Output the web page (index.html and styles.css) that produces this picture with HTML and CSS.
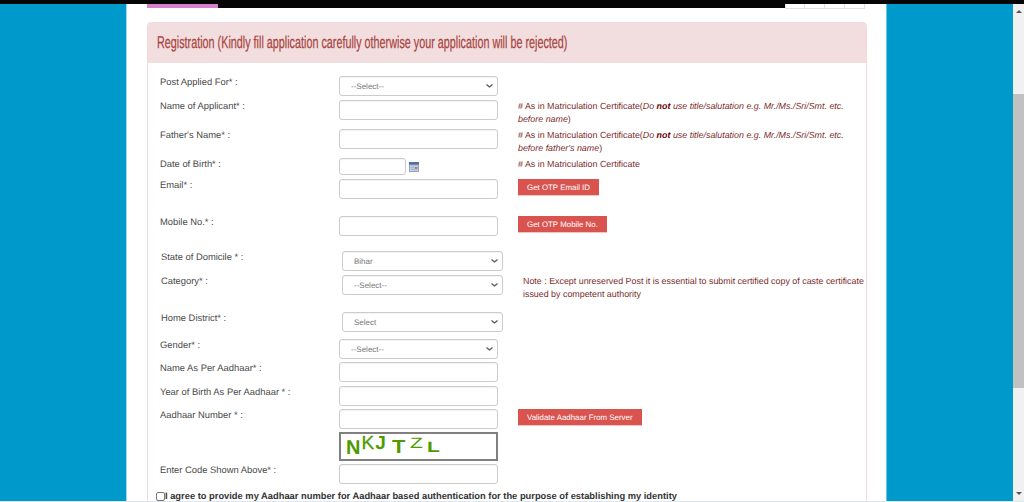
FILE: index.html
```html
<!DOCTYPE html>
<html lang="en">
<head>
<meta charset="utf-8">
<title>Registration</title>
<link rel="stylesheet" href="styles.css">
</head>
<body>
<div class="strip"></div>
<div class="layout">
  <div class="side"></div>
  <main class="main">
    <div class="topnav">
      <div class="nav-bar"><div class="nav-active"></div></div>
      <div class="tabs"><span class="tab"></span><span class="tab"></span><span class="tab"></span><span class="tab"></span></div>
    </div>
    <section class="panel">
      <h1 class="panel-head"><span class="panel-title">Registration (Kindly fill application carefully otherwise your application will be rejected)</span></h1>
      <form class="panel-body">
        <div class="row h24"><label class="lbl">Post Applied For* :</label><select class="field"><option>--Select--</option></select></div>
        <div class="row h29"><label class="lbl">Name of Applicant* :</label><input class="field"><p class="note"># As in Matriculation Certificate(<em>Do <b>not</b> use title/salutation e.g. Mr./Ms./Sri/Smt. etc. before name</em>)</p></div>
        <div class="row h29"><label class="lbl">Father's Name* :</label><input class="field"><p class="note"># As in Matriculation Certificate(<em>Do <b>not</b> use title/salutation e.g. Mr./Ms./Sri/Smt. etc. before father's name</em>)</p></div>
        <div class="row h21"><label class="lbl">Date of Birth* :</label><div class="date"><input class="field field-date"><svg class="cal" viewBox="0 0 10 10" width="10" height="10" aria-hidden="true"><rect width="10" height="10" fill="#8fa6c8"/><rect width="10" height="2.5" fill="#4f6f9f"/><rect x="1" y="3.5" width="8" height="5.5" fill="#d5deec"/><path d="M1 5.3h8M1 7.2h8M3 3.5v5.5M5 3.5v5.5M7 3.5v5.5" stroke="#8fa6c8" stroke-width=".6"/><rect x="6" y="5" width="2.5" height="2" fill="#e0705a"/></svg></div><p class="note"># As in Matriculation Certificate</p></div>
        <div class="row h37"><label class="lbl">Email* :</label><input class="field"><div><button type="button" class="btn">Get OTP Email ID</button></div></div>
        <div class="row h35"><label class="lbl">Mobile No.* :</label><input class="field"><div><button type="button" class="btn">Get OTP Mobile No.</button></div></div>
        <div class="row row-alt h24"><label class="lbl">State of Domicile * :</label><select class="field"><option>Bihar</option></select></div>
        <div class="row row-alt h37"><label class="lbl">Category* :</label><select class="field"><option>--Select--</option></select><p class="note note-plain">Note : Except unreserved Post it is essential to submit certified copy of caste certificate issued by competent authority</p></div>
        <div class="row row-alt h27"><label class="lbl">Home District* :</label><select class="field"><option>Select</option></select></div>
        <div class="row h23"><label class="lbl">Gender* :</label><select class="field"><option>--Select--</option></select></div>
        <div class="row h24"><label class="lbl">Name As Per Aadhaar* :</label><input class="field"></div>
        <div class="row h23"><label class="lbl">Year of Birth As Per Aadhaar * :</label><input class="field"></div>
        <div class="row h23"><label class="lbl">Aadhaar Number * :</label><input class="field"><div><button type="button" class="btn">Validate Aadhaar From Server</button></div></div>
        <div class="row h32"><span></span><div class="captcha"><span class="c1">N</span><span class="c2">K</span><span class="c3">J</span><span class="c4">T</span><span class="c5">Z</span><span class="c6">L</span></div></div>
        <div class="row h26"><label class="lbl">Enter Code Shown Above* :</label><input class="field"></div>
        <div class="agree"><input type="checkbox" class="check"><span>I agree to provide my Aadhaar number for Aadhaar based authentication for the purpose of establishing my identity</span></div>
      </form>
    </section>
  </main>
  <div class="side"></div>
  <div class="scrollbar">
    <span class="arrow arrow-up"></span>
    <span class="thumb"></span>
    <span class="arrow arrow-down"></span>
  </div>
</div>
<div class="statusline"></div>
</body>
</html>
```

FILE: styles.css
```css
* { box-sizing: border-box; text-rendering: geometricPrecision; }
html, body { margin: 0; height: 502px; overflow: hidden; }
body { font-family: "Liberation Sans", Arial, sans-serif; background: #fff; display: flex; flex-direction: column; }

.strip { height: 4px; flex: none; background: #050505; }
.layout { height: 497px; flex: none; display: flex; overflow: hidden; }
.statusline { height: 1px; flex: none; background: #dbe6f3; }

.side { background: #0099cc; flex: none; width: 126px; }
.main { flex: none; width: 761px; padding: 0 19px 0 20px; background: #fff; border-left: 1px solid #9fdcf0; border-right: 1px solid #6cc6e4; overflow: hidden; }

.scrollbar { flex: none; width: 12px; margin-left: auto; background: #f1f1f1; display: flex; flex-direction: column; align-items: center; }
.arrow { flex: none; width: 0; height: 0; border-left: 3px solid transparent; border-right: 3px solid transparent; }
.arrow-up { margin-top: 6px; border-bottom: 3px solid #555; }
.arrow-down { margin-top: 104px; border-top: 3px solid #555; }
.thumb { flex: none; width: 100%; height: 294px; margin-top: 81px; background: #c1c1c1; }

.topnav { display: flex; height: 5px; }
.nav-bar { flex: none; width: 638px; height: 4px; background: #050505; }
.nav-active { width: 71px; height: 4px; background: #d680cc; }
.tabs { display: flex; }
.tab { width: 20px; height: 5px; background: #fff; border: 1px solid #e2e2e2; border-top: 0; }
.tab + .tab { border-left: 0; }

.panel { margin-top: 13px; width: 720px; height: 700px; border: 1px solid #f0dadd; border-radius: 4px; background: #fff; }
.panel-head { margin: 0; height: 40px; padding: 0 9px; background: #f2dede; color: #a94442; font: 400 17px/39px "Liberation Sans", sans-serif; white-space: nowrap; }
.panel-title { display: inline-block; transform: scaleX(.635); transform-origin: left center; -webkit-text-stroke: .25px #a94442; }
.panel-body { margin: 0; padding: 13px 0 0 12px; }

.row { display: grid; grid-template-columns: 179px 159px 1fr; align-items: start; }
.row-alt { grid-template-columns: 181px 161px 1fr; padding-left: 1px; }
.h21 { height: 21px; } .h23 { height: 23px; } .h24 { height: 24px; } .h26 { height: 26px; }
.h27 { height: 27px; } .h29 { height: 29px; } .h32 { height: 32px; } .h35 { height: 35px; } .h36 { height: 36px; } .h37 { height: 37px; }
.row > div:nth-child(3) { margin-left: 20px; }

.lbl { font-size: 9.400px; line-height: 12px; color: #4a4a4a; white-space: nowrap; }
.field { display: block; width: 100%; height: 20px; padding: 0 7px; margin: 0; background: #fff; border: 1px solid #ccc; border-radius: 3px; box-shadow: inset 0 1px 1px rgba(0,0,0,.05); font: 8px "Liberation Sans", sans-serif; color: #777; }
select.field { appearance: none; padding-left: 11px; background: #fff url("data:image/svg+xml,%3Csvg xmlns='http://www.w3.org/2000/svg' width='7' height='4'%3E%3Cpath d='M.5.5 3.500 3 6.500.5' fill='none' stroke='%23555' stroke-width='1.200'/%3E%3C/svg%3E") no-repeat right 4px center; }
.date { display: flex; align-items: center; gap: 3px; height: 17px; }
.field-date { width: 67px; height: 17px; }
.cal { flex: none; }

.note { margin: 0 0 0 20px; font-size: 8.900px; line-height: 12.500px; color: #7b2c2c; width: 335px; }
.note b { color: #6a0000; }
.note-plain { width: 345px; }

.btn { display: block; height: 17px; padding: 0 9px; background: #d9534f; border: 0; border-bottom: 1px solid #f0c4c2; border-radius: 0; color: #fff; font: 7.900px/15px "Liberation Sans", sans-serif; white-space: nowrap; }

.captcha { height: 29px; border: 2px solid #808080; background: #fff; display: flex; align-items: flex-start; padding-left: 5px; color: #4f9a00; font-weight: 700; line-height: 1; }
.c1 { font-size: 20px; margin-top: 4px; }
.c2 { font-size: 19px; margin: 0 0 0 1px; font-weight: 400; -webkit-text-stroke: .3px #4f9a00; }
.c3 { font-size: 19px; margin: 0 0 0 1px; }
.c4 { font-size: 19px; margin: 4px 0 0 6px; transform: scaleX(1.15); transform-origin: left; }
.c5 { font-size: 15px; margin: 2px 0 0 7px; font-weight: 400; transform: scaleX(1.4); transform-origin: left; }
.c6 { font-size: 15px; margin: 6px 0 0 7px; transform: scaleX(1.4); transform-origin: left; }

.agree { display: flex; align-items: center; margin-left: -4px; height: 12px; font-size: 9.330px; font-weight: 700; color: #333; white-space: nowrap; }
.check { appearance: none; width: 9px; height: 9px; margin: 0; flex: none; background: #fff; border: 1px solid #767676; border-radius: 2px; }
```
